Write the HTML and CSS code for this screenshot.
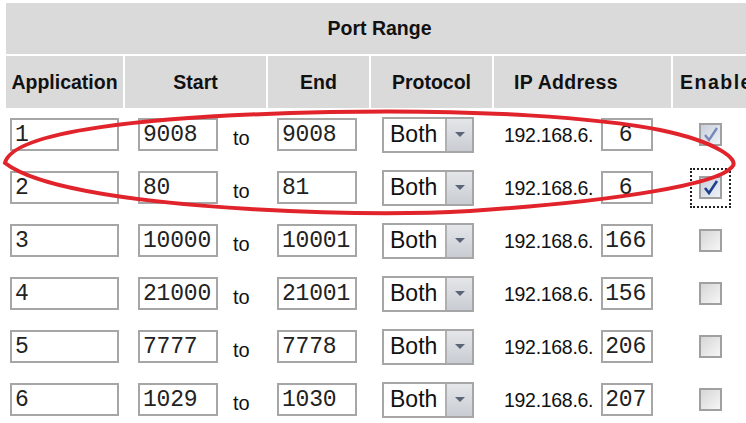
FILE: index.html
```html
<!DOCTYPE html>
<html>
<head>
<meta charset="utf-8">
<link rel="stylesheet" href="styles.css">
</head>
<body>
<div class="page">
  <div class="grid">
    <div class="title">Port Range</div>
    <div class="th">Application</div>
    <div class="th">Start</div>
    <div class="th">End</div>
    <div class="th">Protocol</div>
    <div class="th th-ip">IP Address</div>
    <div class="th th-en">Enable</div>

    <div class="cell c-app"><input class="box app" value="1"></div>
    <div class="cell c-start"><input class="box port" value="9008"><span class="to">to</span></div>
    <div class="cell c-end"><input class="box port" value="9008"></div>
    <div class="cell c-proto"><div class="sel"><span class="sel-text">Both</span><span class="sel-btn"><i class="tri"></i></span></div></div>
    <div class="cell c-ip"><span class="ip-pre">192.168.6.</span><input class="box ip" value=" 6"></div>
    <div class="cell c-en"><span class="chk checked faded"><svg viewBox="0 0 19 19" width="19" height="19"><path d="M4 10 L8 15 L16 3" fill="none" stroke="#7a88b8" stroke-width="2.4"/></svg></span></div>

    <div class="cell c-app"><input class="box app" value="2"></div>
    <div class="cell c-start"><input class="box port" value="80"><span class="to">to</span></div>
    <div class="cell c-end"><input class="box port" value="81"></div>
    <div class="cell c-proto"><div class="sel"><span class="sel-text">Both</span><span class="sel-btn"><i class="tri"></i></span></div></div>
    <div class="cell c-ip"><span class="ip-pre">192.168.6.</span><input class="box ip" value=" 6"></div>
    <div class="cell c-en"><span class="focus"><span class="chk checked"><svg viewBox="0 0 19 19" width="19" height="19"><path d="M4 10 L8 15 L16 3" fill="none" stroke="#1f3f8f" stroke-width="2.6"/></svg></span></span></div>

    <div class="cell c-app"><input class="box app" value="3"></div>
    <div class="cell c-start"><input class="box port" value="10000"><span class="to">to</span></div>
    <div class="cell c-end"><input class="box port" value="10001"></div>
    <div class="cell c-proto"><div class="sel"><span class="sel-text">Both</span><span class="sel-btn"><i class="tri"></i></span></div></div>
    <div class="cell c-ip"><span class="ip-pre">192.168.6.</span><input class="box ip" value="166"></div>
    <div class="cell c-en"><span class="chk"></span></div>

    <div class="cell c-app"><input class="box app" value="4"></div>
    <div class="cell c-start"><input class="box port" value="21000"><span class="to">to</span></div>
    <div class="cell c-end"><input class="box port" value="21001"></div>
    <div class="cell c-proto"><div class="sel"><span class="sel-text">Both</span><span class="sel-btn"><i class="tri"></i></span></div></div>
    <div class="cell c-ip"><span class="ip-pre">192.168.6.</span><input class="box ip" value="156"></div>
    <div class="cell c-en"><span class="chk"></span></div>

    <div class="cell c-app"><input class="box app" value="5"></div>
    <div class="cell c-start"><input class="box port" value="7777"><span class="to">to</span></div>
    <div class="cell c-end"><input class="box port" value="7778"></div>
    <div class="cell c-proto"><div class="sel"><span class="sel-text">Both</span><span class="sel-btn"><i class="tri"></i></span></div></div>
    <div class="cell c-ip"><span class="ip-pre">192.168.6.</span><input class="box ip" value="206"></div>
    <div class="cell c-en"><span class="chk"></span></div>

    <div class="cell c-app"><input class="box app" value="6"></div>
    <div class="cell c-start"><input class="box port" value="1029"><span class="to">to</span></div>
    <div class="cell c-end"><input class="box port" value="1030"></div>
    <div class="cell c-proto"><div class="sel"><span class="sel-text">Both</span><span class="sel-btn"><i class="tri"></i></span></div></div>
    <div class="cell c-ip"><span class="ip-pre">192.168.6.</span><input class="box ip" value="207"></div>
    <div class="cell c-en"><span class="chk"></span></div>
  </div>
</div>
<svg class="mark" width="746" height="423" viewBox="0 0 746 423">
  <path d="M5 163 C 12 132, 140 116, 330 112 C 480 109, 600 118, 660 130 C 718 142, 740 160, 732 167 C 718 184, 620 201, 470 211 C 400 215, 320 213, 250 209 C 150 203, 40 190, 5 163 Z" fill="none" stroke="#e1232b" stroke-width="4"/>
</svg>
</body>
</html>
```
FILE: styles.css
```css
html, body {
  margin: 0;
  padding: 0;
  background: #fff;
  overflow: hidden;
}
.page {
  padding: 3px 0 0 6px;
  width: 753px;
}
.grid {
  display: grid;
  grid-template-columns: 117px 141px 101px 121px 177px 80px;
  column-gap: 2px;
  row-gap: 2px;
  grid-auto-rows: 51px;
}
.title {
  grid-column: 1 / -1;
  height: 51px;
  background: #dadada;
  display: flex;
  align-items: center;
  justify-content: center;
  font: bold 19.5px "Liberation Sans", Arial, sans-serif;
  color: #111;
}
.th {
  height: 52px;
  background: #dadada;
  display: flex;
  align-items: center;
  justify-content: center;
  font: bold 19.5px "Liberation Sans", Arial, sans-serif;
  color: #111;
  white-space: nowrap;
}
.th-ip {
  justify-content: flex-start;
  padding-left: 20px;
  letter-spacing: 0.3px;
}
.th-en {
  justify-content: flex-start;
  padding-left: 7px;
  letter-spacing: 1.5px;
}
.cell {
  display: flex;
  align-items: center;
  height: 51px;
}
.box {
  box-sizing: border-box;
  height: 33px;
  border: 2px solid #a6a6a6;
  background: #fff;
  padding: 0 3px;
  margin: 0;
  font: 23px "Liberation Mono", "Courier New", monospace;
  letter-spacing: -0.2px;
  color: #222;
  outline: none;
}
.app { width: 109px; }
.port { width: 80px; }
.ip { width: 52px; padding: 0 2px; }
.c-app { padding-left: 4px; }
.c-start { padding-left: 13px; }
.c-end { padding-left: 9px; }
.c-proto { padding-left: 11px; }
.c-ip { padding-left: 10px; }
.c-en { padding-left: 26px; }
.to {
  margin-left: 15px;
  margin-top: 7px;
  font: 20px "Liberation Sans", Arial, sans-serif;
  color: #111;
}
.sel {
  box-sizing: border-box;
  width: 92px;
  height: 36px;
  border: 2px solid #a6a6a6;
  background: #fff;
  display: flex;
  align-items: stretch;
}
.sel-text {
  flex: 1;
  display: flex;
  align-items: center;
  padding-left: 6px;
  font: 23px "Liberation Sans", Arial, sans-serif;
  color: #111;
}
.sel-btn {
  width: 25px;
  border-left: 2px solid #b0b0b0;
  background: linear-gradient(#e4e6e9, #c9cdd3);
  display: flex;
  align-items: center;
  justify-content: center;
}
.tri {
  width: 0;
  height: 0;
  border-left: 5px solid transparent;
  border-right: 5px solid transparent;
  border-top: 5px solid #5c6478;
}
.ip-pre {
  font: 19.5px "Liberation Sans", Arial, sans-serif;
  letter-spacing: -0.3px;
  color: #111;
  margin-top: 2px;
  margin-right: 8px;
}
.chk {
  box-sizing: border-box;
  width: 23px;
  height: 23px;
  border: 2px solid #a0a0a0;
  background: linear-gradient(135deg, #d6d6d6, #f6f6f6);
  display: flex;
  align-items: center;
  justify-content: center;
}
.chk.checked {
  background: linear-gradient(135deg, #c8d0dc, #eef2f8);
}
.focus {
  display: flex;
  margin-left: -9px;
  padding: 6px 7px 7px 7px;
  border: 2px dotted #222;
}
.mark {
  position: absolute;
  left: 0;
  top: 0;
  pointer-events: none;
}
```
